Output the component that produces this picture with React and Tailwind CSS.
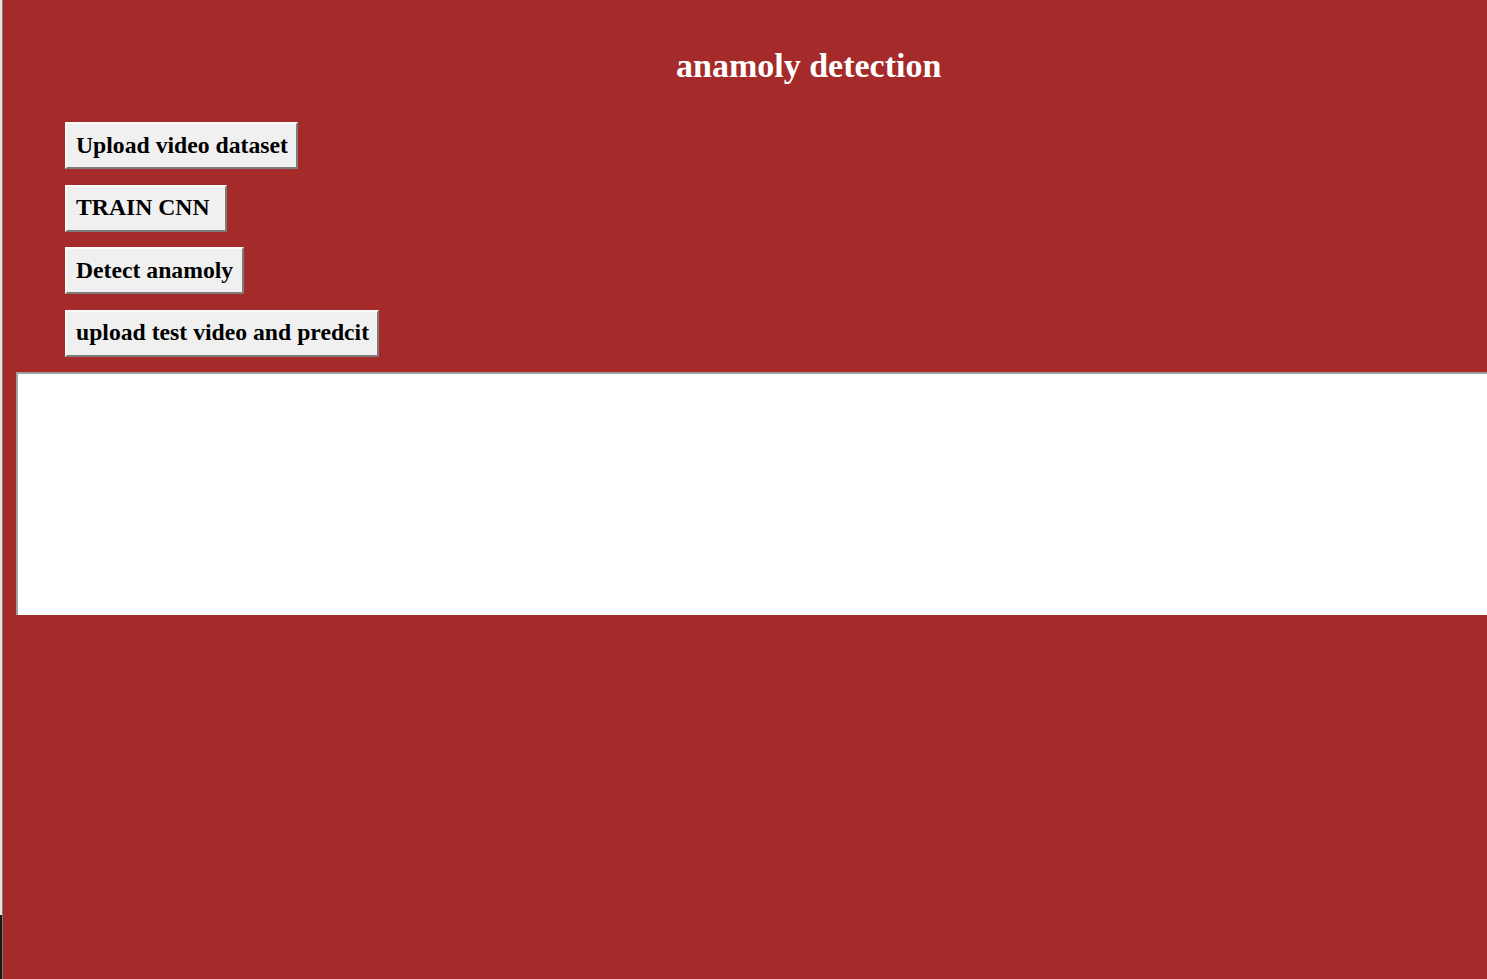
export default function App() {
  const buttons = [
    { label: "Upload video dataset", extra: "pr-[8px]" },
    { label: "TRAIN CNN", extra: "pr-[15px]" },
    { label: "Detect anamoly", extra: "pr-[9px]" },
    { label: "upload test video and predcit", extra: "pr-[8px]" },
  ];

  return (
    <div className="flex h-[979px] w-[1487px] overflow-hidden bg-[#a52a2a] font-['Liberation_Serif',serif]">
      <div className="flex h-full w-[3px] shrink-0 flex-col border-r border-[#7a7a7a]">
        <div className="flex-1 bg-[#e4e4e4]" />
        <div className="h-[64px] bg-[#1a1a1a]" />
      </div>
      <div className="flex flex-1 flex-col">
        <h1 className="mt-[46px] pl-[673px] text-[34px] font-bold leading-[40px] text-white">
          anamoly detection
        </h1>
        <div className="mt-[36px] flex flex-col items-start gap-[15.5px] pl-[62px]">
          {buttons.map((b) => (
            <button
              key={b.label}
              className={`h-[47px] border-2 border-t-[#fafafa] border-l-[#fafafa] border-r-[#7c7c7c] border-b-[#7c7c7c] bg-[#f0f0f0] pl-[9px] text-[23.7px] font-bold leading-none text-black ${b.extra}`}
            >
              {b.label}
            </button>
          ))}
        </div>
        <div className="ml-[13px] mt-[15.5px] h-[243px] border-t-2 border-l-2 border-t-[#a0a0a0] border-l-[#a0a0a0] bg-white" />
      </div>
    </div>
  );
}
